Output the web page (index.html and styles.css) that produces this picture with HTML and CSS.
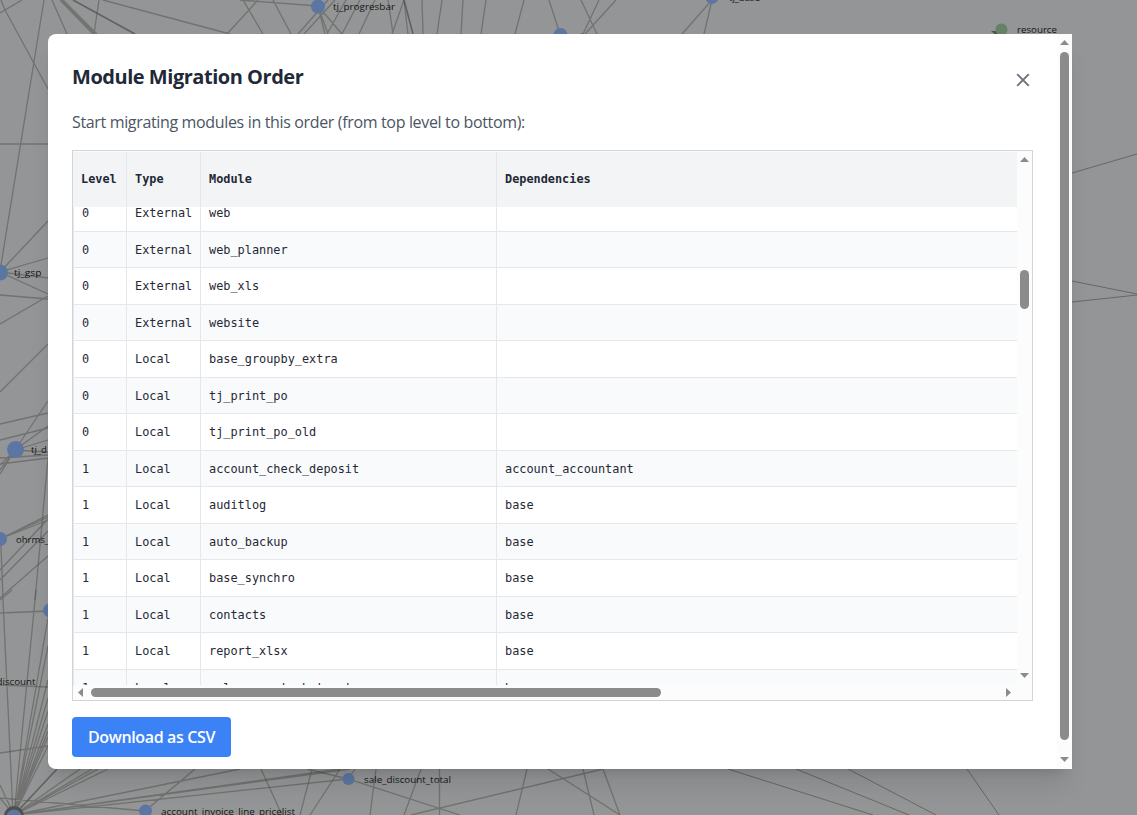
FILE: index.html
```
<!DOCTYPE html>
<html lang="en">
<head>
<meta charset="utf-8">
<title>Module Migration Order</title>
<link rel="stylesheet" href="styles.css">
</head>
<body>
<svg class="graph" width="1137" height="815" viewBox="0 0 1137 815" aria-hidden="true">
  <g class="edges">
    <path d="M0 13L22 0M1 0L5 10L48 89M44 0L1 265M0 144H48M52 0L67 34M60 0L93 34M61 0L95 34M63 0L97 34M99 0L94 34M103 0L230 34M240 0L318 6M243 0L263 34M258 0L227 34M273 0L291 34"/>
    <path d="M328 0L298 34M335 0L304 34M318 6L325 34M318 6L328 34M318 6L342 34M346 0L327 34M360 0L342 34M375 0L359 34M388 0L393 34M404 0L392 34M404 0L408 34M422 0L423 34M442 0L437 34M463 0L461 34M486 0L481 34M524 0L515 34M549 0L560 34M581 0L597 34M599 0L583 34M616 0L585 34M712 0L682 34M712 0L704 34"/>
    <path d="M0 272L48 221M0 272L48 258M0 272L48 278M0 272L48 294M0 295L48 299M0 324L48 296M0 392L48 344"/>
    <path d="M15 450L48 401M15 450L48 426M15 450L48 440M15 450L48 452M0 424L48 413M0 440L48 428M0 458L48 455M0 464L48 458M15 450L0 465M15 450L0 470M15 450L0 474M48 458L35 600"/>
    <path d="M0 539L48 515M0 539L48 517M0 539L48 520M0 570L48 519M0 580L48 531M0 598L48 556M1 546L3 600L13 815M0 600L12 590M0 613L50 611M36 590L14 815M0 685L48 687"/>
    <path d="M14 815L48 618M14 815L48 646M14 815L48 680M14 815L48 698M14 815L48 711M14 815L48 724M14 815L48 731M14 815L48 737M14 815L48 746M0 753L48 746M14 815L80 769M14 815L92 769M14 815L98 769M14 815L108 769M14 815L240 769M14 815L350 769M14 815L340 769M14 815L348 779M0 798L145 811L195 769M14 815L0 785M14 815L0 798"/>
    <path d="M307 769L348 779L460 815M261 769L282 815M312 769L300 815M340 769L310 815M355 769L348 779M376 769L370 815M421 769L404 815M439.500 769V815M527 769L516 815M411 815L603 769M548 769L620 815M583 769L594 815M603 769L620 815"/>
    <path class="edge-far" d="M728 769L873 815M796 769L909 815M848 769L936 815M967 769L999 815M1072 173L1137 154M1072 281L1137 294M1072 302L1137 295"/>
    <path class="edge-heavy" d="M73 0L135 34M404 0L413 34M14 815L57 769"/>
  </g>
  <path class="arrow" d="M991 31h9v4h-4z"/>
  <circle class="hub" cx="14" cy="816" r="10"/>
  <g class="nodes">
    <circle cx="318" cy="6.500" r="7"/>
    <circle cx="560.500" cy="35" r="7"/>
    <circle cx="712" cy="-2.500" r="6.500"/>
    <circle cx="0" cy="272.500" r="8"/>
    <circle cx="15.500" cy="449.500" r="8.500"/>
    <circle cx="0" cy="539" r="7"/>
    <circle cx="50" cy="610.500" r="7"/>
    <circle cx="14" cy="817" r="7.500"/>
    <circle cx="145.500" cy="811" r="6.500"/>
    <circle cx="348.500" cy="779" r="6"/>
    <circle class="root" cx="1001.500" cy="29.500" r="6"/>
  </g>
  <g class="labels">
    <text x="333" y="10" textLength="62" lengthAdjust="spacingAndGlyphs">tj_progresbar</text>
    <text x="729" y="1" textLength="31" lengthAdjust="spacingAndGlyphs">tj_base</text>
    <text x="577" y="40">tj_</text>
    <text x="1017" y="33" textLength="40" lengthAdjust="spacingAndGlyphs">resource</text>
    <text x="14" y="276" textLength="27.500" lengthAdjust="spacingAndGlyphs">tj_gsp</text>
    <text x="31" y="453">tj_d</text>
    <text x="16" y="543" textLength="33" lengthAdjust="spacingAndGlyphs">ohrms_</text>
    <text x="-3.500" y="685" textLength="39" lengthAdjust="spacingAndGlyphs">discount</text>
    <text x="364" y="783" textLength="87" lengthAdjust="spacingAndGlyphs">sale_discount_total</text>
    <text x="161" y="815" textLength="134" lengthAdjust="spacingAndGlyphs">account_invoice_line_pricelist</text>
  </g>
</svg>

<main class="modal">
  <div class="modal-body">
    <header class="modal-head">
      <h1>Module Migration Order</h1>
      <button class="close" aria-label="Close"><svg width="14" height="14" viewBox="0 0 14 14"><path d="M1.200 1.200L12.800 12.800M12.800 1.200L1.200 12.800"/></svg></button>
    </header>
    <p class="intro"><span>Start migrating modules in this order (from top level to bottom):</span></p>
    <section class="table-box">
      <div class="table">
        <div class="row head"><b>Level</b><b>Type</b><b>Module</b><b>Dependencies</b></div>
        <div class="rows">
          <div class="row"><span>0</span><span>External</span><span>web</span><span></span></div>
          <div class="row"><span>0</span><span>External</span><span>web_planner</span><span></span></div>
          <div class="row"><span>0</span><span>External</span><span>web_xls</span><span></span></div>
          <div class="row"><span>0</span><span>External</span><span>website</span><span></span></div>
          <div class="row"><span>0</span><span>Local</span><span>base_groupby_extra</span><span></span></div>
          <div class="row"><span>0</span><span>Local</span><span>tj_print_po</span><span></span></div>
          <div class="row"><span>0</span><span>Local</span><span>tj_print_po_old</span><span></span></div>
          <div class="row"><span>1</span><span>Local</span><span>account_check_deposit</span><span>account_accountant</span></div>
          <div class="row"><span>1</span><span>Local</span><span>auditlog</span><span>base</span></div>
          <div class="row"><span>1</span><span>Local</span><span>auto_backup</span><span>base</span></div>
          <div class="row"><span>1</span><span>Local</span><span>base_synchro</span><span>base</span></div>
          <div class="row"><span>1</span><span>Local</span><span>contacts</span><span>base</span></div>
          <div class="row"><span>1</span><span>Local</span><span>report_xlsx</span><span>base</span></div>
          <div class="row"><span>1</span><span>Local</span><span>sale_report_abstract</span><span>base</span></div>
        </div>
      </div>
      <div class="bar-v bar-table">
        <svg width="9" height="5"><path d="M0 5L4.500 0L9 5z"/></svg>
        <i class="thumb"></i>
        <svg class="end" width="9" height="5"><path d="M0 0L4.500 5L9 0z"/></svg>
      </div>
      <div class="bar-h">
        <svg width="5" height="9"><path d="M5 0L0 4.500L5 9z"/></svg>
        <i class="thumb"></i>
        <svg class="end" width="5" height="9"><path d="M0 0L5 4.500L0 9z"/></svg>
      </div>
    </section>
    <button class="download"><span>Download as CSV</span></button>
  </div>
  <div class="bar-v bar-modal">
    <svg width="9" height="5"><path d="M0 5L4.500 0L9 5z"/></svg>
    <i class="thumb"></i>
    <svg class="end" width="9" height="5"><path d="M0 0L4.500 5L9 0z"/></svg>
  </div>
</main>
</body>
</html>
```
FILE: styles.css
```
* { box-sizing: border-box; }
body {
  margin: 0;
  height: 815px;
  overflow: hidden;
  padding: 34px 65px 46px 48px;
  background: #949596;
  color: #1f2937;
  font-family: "Open Sans", "Noto Sans", sans-serif;
}
button { border: 0; padding: 0; font: inherit; }
svg { display: block; }

/* dependency graph behind the dialog */
.graph { position: absolute; left: 0; top: 0; }
.edges { fill: none; stroke: #50504c; stroke-opacity: .5; stroke-width: 1.3; }
.edge-far { stroke-width: 1; stroke-opacity: .65; }
.edge-heavy { stroke-width: 1.6; stroke-opacity: .75; }
.nodes { fill: #5b76a3; }
.nodes .root { fill: #648366; }
.hub { fill: #505050; }
.arrow { fill: #4f5050; }
.labels { font-family: "Open Sans", "Noto Sans", sans-serif; font-size: 9.5px; fill: #151515; }

/* dialog */
.modal {
  position: relative;
  display: flex;
  width: 1024px;
  height: 735px;
  background: #fff;
  border-radius: 8px 0 0 8px;
  box-shadow: 0 20px 25px -5px rgba(0, 0, 0, .1), 0 8px 10px -6px rgba(0, 0, 0, .1);
}
.modal-body { width: 1009px; padding: 24px 24px 12px; }
.modal-head { display: flex; justify-content: space-between; height: 42px; }
h1 { margin: 5px 0 0; font-size: 20px; line-height: 28px; font-weight: 700; letter-spacing: -.47px; white-space: nowrap; }
.close { width: 14px; height: 14px; margin: 15px 3px 0 0; background: none; }
.close path { fill: none; stroke: #6b7280; stroke-width: 1.9; }
.intro { margin: 10px 0 16px; height: 24px; line-height: 25px; font-size: 16px; color: #4b5563; white-space: nowrap; letter-spacing: -.345px; }
.table-box {
  display: grid;
  grid-template: 533px 15px / 944px 15px;
  width: 961px;
  height: 551px;
  border: 1px solid #d1d5db;
  padding-top: 1px;
  background: #fcfcfc;
}
.table { overflow: hidden; background: #fff; font-family: "DejaVu Sans Mono", monospace; font-size: 11.88px; }
.row {
  display: grid;
  grid-template-columns: 53px 74px 296px 520px;
  flex: none;
  height: 36.5px;
  line-height: 36px;
  border-bottom: 1px solid #e5e7eb;
}
.row > * { padding-left: 8px; border-right: 1px solid #e5e7eb; white-space: nowrap; }
.row > :last-child { border-right: 0; }
.row:nth-child(even) { background: #f9fafb; }
.row.head { grid-template-columns: 54px 74px 296px 520px; height: 55px; line-height: 54px; background: #f3f4f6; border: 0; letter-spacing: -.01px; }
.rows { display: flex; flex-direction: column; height: 478px; overflow: hidden; border-left: 1px solid #e5e7eb; }
.rows .row:first-child { margin-top: -11.6px; }

/* scroll bars */
.bar-v, .bar-h { display: flex; align-items: center; background: #fcfcfc; fill: #8b8b8b; }
.bar-v { flex-direction: column; width: 15px; }
.thumb { border-radius: 5px; background: #8b8b8b; }
.end { margin-top: auto; }
.bar-table { padding: 5px 0 7px; }
.bar-table .thumb { width: 9px; height: 39px; margin-top: 108px; }
.bar-h { padding: 0 6px 0 5px; }
.bar-h .thumb { width: 570px; height: 9px; margin-left: 8px; }
.bar-h .end { margin: 0 0 0 auto; }
.bar-modal { padding: 6px 0 7px; }
.bar-modal .thumb { width: 9px; height: 688px; margin-top: 7px; }

.download {
  display: block;
  margin-top: 16px;
  width: 159px;
  height: 40px;
  border-radius: 4px;
  background: #3b82f6;
  color: #fff;
  font-size: 16px;
  font-weight: 600;
  letter-spacing: -.35px;
  white-space: nowrap;
}
```
